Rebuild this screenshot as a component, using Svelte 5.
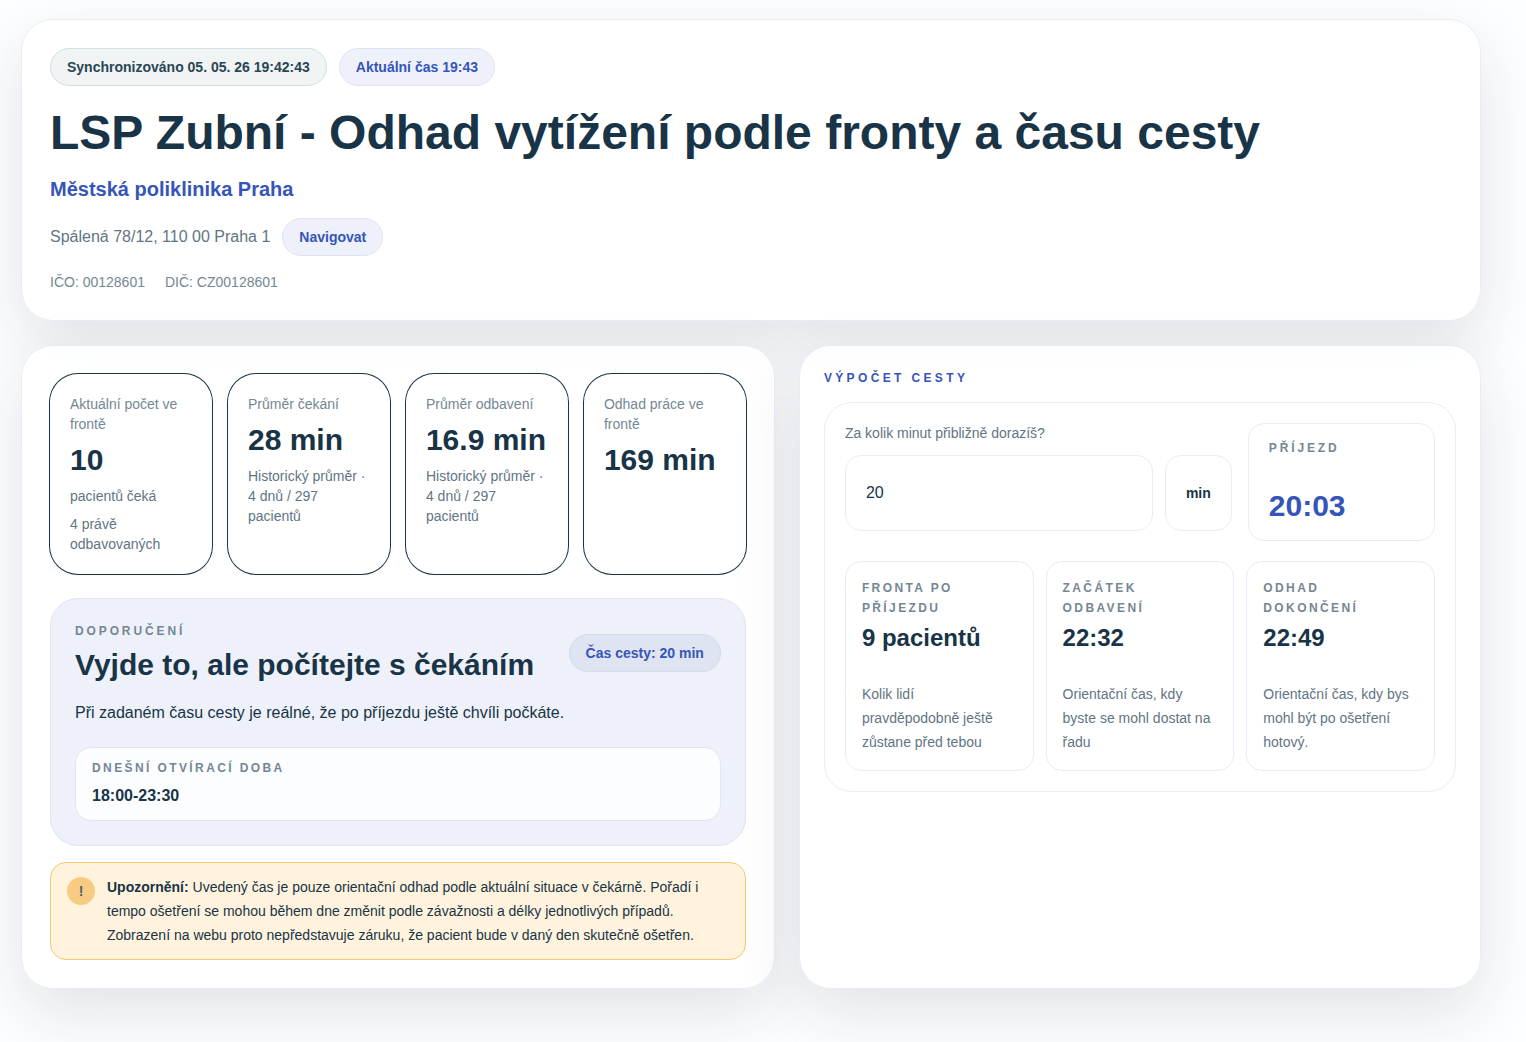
<script lang="ts">
	let minutes = $state(20);

	const stats = [
		{ label: 'Aktuální počet ve frontě', value: '10', notes: ['pacientů čeká', '4 právě odbavovaných'] },
		{ label: 'Průměr čekání', value: '28 min', notes: ['Historický průměr · 4 dnů / 297 pacientů'] },
		{ label: 'Průměr odbavení', value: '16.9 min', notes: ['Historický průměr · 4 dnů / 297 pacientů'] },
		{ label: 'Odhad práce ve frontě', value: '169 min', notes: [] }
	];

	const results = [
		{ label: 'Fronta po příjezdu', value: '9 pacientů', text: 'Kolik lidí pravděpodobně\u00a0ještě zůstane před tebou' },
		{ label: 'Začátek odbavení', value: '22:32', text: 'Orientační čas, kdy byste se mohl dostat na řadu' },
		{ label: 'Odhad dokončení', value: '22:49', text: 'Orientační čas, kdy bys mohl být po ošetření hotový.' }
	];

	// current time is 19:43
	const arrival = $derived.by(() => {
		const total = 19 * 60 + 43 + (Number(minutes) || 0);
		const h = Math.floor(total / 60) % 24;
		const m = total % 60;
		return `${String(h).padStart(2, '0')}:${String(m).padStart(2, '0')}`;
	});
</script>

<main class="page">
	<header class="card hero">
		<div class="pills">
			<span class="pill pill-sync">Synchronizováno 05. 05. 26 19:42:43</span>
			<span class="pill">Aktuální čas 19:43</span>
		</div>
		<h1>LSP Zubní - Odhad vytížení podle fronty a času cesty</h1>
		<p class="clinic">Městská poliklinika Praha</p>
		<div class="address">
			<span>Spálená 78/12, 110 00 Praha 1</span>
			<a class="pill" href="#navigate">Navigovat</a>
		</div>
		<div class="ids">
			<span>IČO: 00128601</span>
			<span>DIČ: CZ00128601</span>
		</div>
	</header>

	<div class="columns">
		<section class="card overview">
			<div class="stats">
				{#each stats as stat}
					<article class="stat">
						<p class="stat-label">{stat.label}</p>
						<p class="big">{stat.value}</p>
						{#each stat.notes as note}
							<p class="stat-note">{note}</p>
						{/each}
					</article>
				{/each}
			</div>

			<div class="advice">
				<div class="advice-head">
					<div>
						<p class="kicker wide">Doporučení</p>
						<h2>Vyjde to, ale počítejte s čekáním</h2>
					</div>
					<span class="pill pill-travel">Čas cesty: {minutes} min</span>
				</div>
				<p class="advice-text">Při zadaném času cesty je reálné, že po příjezdu ještě chvíli počkáte.</p>
				<div class="hours">
					<p class="kicker">Dnešní otvírací doba</p>
					<p class="hours-value">18:00-23:30</p>
				</div>
			</div>

			<div class="warning">
				<span class="warning-icon">!</span>
				<p>
					<strong>Upozornění:</strong>
					<span>
						Uvedený čas je pouze orientační odhad podle aktuální situace v čekárně. Pořadí i tempo ošetření
						se mohou během dne změnit podle závažnosti a délky jednotlivých případů. Zobrazení na webu proto
						nepředstavuje záruku, že pacient bude v daný den skutečně ošetřen.
					</span>
				</p>
			</div>
		</section>

		<section class="card travel">
			<p class="travel-title">Výpočet cesty</p>
			<div class="calculator">
				<div class="entry">
					<div>
						<label for="minutes">Za kolik minut přibližně dorazíš?</label>
						<div class="entry-row">
							<input id="minutes" type="text" inputmode="numeric" bind:value={minutes} />
							<span class="unit">min</span>
						</div>
					</div>
					<div class="arrival">
						<p class="kicker wide">Příjezd</p>
						<p class="arrival-time">{arrival}</p>
					</div>
				</div>
				<div class="results">
					{#each results as result}
						<article class="result">
							<p class="kicker result-label">{result.label}</p>
							<p class="result-value">{result.value}</p>
							<p class="result-text">{result.text}</p>
						</article>
					{/each}
				</div>
			</div>
		</section>
	</div>
</main>

<style>
	:global(body) {
		background: #fdfeff;
	}

	.page {
		--ink: #183446;
		--muted: #5f7583;
		--label: #748792;
		--blue: #3655b8;
		--line: #ebebf8;
		display: flex;
		flex-direction: column;
		gap: 24px;
		padding: 19px 45px 53px 21px;
		color: var(--ink);
		font-family: 'Liberation Sans', Arial, sans-serif;
		font-size: 14px;
		line-height: 20px;
	}

	.page,
	.page * {
		box-sizing: border-box;
	}

	h1,
	h2,
	p {
		margin: 0;
	}

	.card {
		border: 1px solid var(--line);
		border-radius: 32px;
		background: rgba(255, 255, 255, 0.9);
		box-shadow: 0 24px 64px rgba(24, 36, 60, 0.12);
	}

	.hero {
		padding: 28px;
	}

	.pills {
		display: flex;
		flex-wrap: wrap;
		gap: 12px;
	}

	.pill {
		flex-shrink: 0;
		padding: 8px 16px;
		border: 1px solid #dfe3f4;
		border-radius: 20px;
		background: #eef1fa;
		color: var(--blue);
		font-weight: 700;
		text-decoration: none;
	}

	.pill-sync {
		border-color: #d3dde3;
		background: #f0f4f5;
		color: #294653;
	}

	.pill-travel {
		border-color: #d5dbea;
		background: #dfe4f3;
	}

	h1 {
		margin-top: 20px;
		font-size: 48px;
		line-height: 54px;
	}

	.clinic {
		margin-top: 16px;
		color: var(--blue);
		font-size: 20px;
		font-weight: 700;
		line-height: 26px;
	}

	.address {
		display: flex;
		flex-wrap: wrap;
		align-items: center;
		gap: 12px;
		margin-top: 16px;
		color: var(--muted);
		font-size: 16px;
	}

	.address .pill {
		font-size: 14px;
	}

	.ids {
		display: flex;
		gap: 20px;
		margin-top: 16px;
		color: var(--label);
	}

	.columns {
		display: grid;
		grid-template-columns: 1.05fr 0.95fr;
		gap: 24px;
	}

	.overview {
		padding: 28px;
	}

	.stats {
		display: grid;
		grid-template-columns: repeat(4, 1fr);
		gap: 16px;
	}

	.stat {
		padding: 20px;
		border-radius: 28px;
		background: #fff;
		box-shadow: 0 0 0 1px var(--ink);
	}

	.stat-label {
		color: var(--label);
	}

	.big {
		margin-top: 8px;
		font-size: 30px;
		font-weight: 700;
		line-height: 36px;
		white-space: nowrap;
	}

	.stat-note {
		margin-top: 8px;
		color: var(--muted);
	}

	.advice {
		margin-top: 24px;
		padding: 24px;
		border: 1px solid #dfe3f4;
		border-radius: 28px;
		background: #eef1fa;
	}

	.advice-head {
		display: flex;
		align-items: center;
		justify-content: space-between;
		gap: 16px;
	}

	.kicker {
		color: var(--label);
		font-size: 12px;
		font-weight: 700;
		letter-spacing: 0.2em;
		line-height: 16px;
		text-transform: uppercase;
	}

	.kicker.wide {
		letter-spacing: 0.24em;
	}

	h2 {
		margin-top: 8px;
		font-size: 30px;
		line-height: 36px;
	}

	.advice-text {
		margin-top: 16px;
		font-size: 16px;
		line-height: 28px;
	}

	.hours {
		margin-top: 20px;
		padding: 12px 16px;
		border: 1px solid #e2e6f4;
		border-radius: 16px;
		background: #fcfdff;
	}

	.hours-value {
		margin-top: 8px;
		font-size: 16px;
		font-weight: 700;
		line-height: 24px;
	}

	.warning {
		display: flex;
		gap: 12px;
		margin-top: 16px;
		padding: 12px 16px;
		border: 1px solid #f5c877;
		border-radius: 16px;
		background: #fff3de;
		line-height: 24px;
	}

	.warning-icon {
		flex: none;
		width: 28px;
		height: 28px;
		margin-top: 2px;
		border-radius: 50%;
		background: #f8cb82;
		color: #4f626c;
		font-weight: 700;
		line-height: 28px;
		text-align: center;
	}

	.travel {
		padding: 24px;
	}

	.travel-title {
		color: var(--blue);
		font-size: 12px;
		font-weight: 700;
		letter-spacing: 0.28em;
		line-height: 16px;
		text-transform: uppercase;
	}

	.calculator {
		margin-top: 16px;
		padding: 20px;
		border: 1px solid var(--line);
		border-radius: 28px;
		background: #fff;
	}

	.entry {
		display: grid;
		grid-template-columns: 31fr 15fr;
		gap: 16px;
	}

	label {
		display: block;
		color: var(--muted);
		font-weight: 500;
	}

	.entry-row {
		display: flex;
		gap: 12px;
		margin-top: 12px;
	}

	input,
	.unit,
	.arrival,
	.result {
		border: 1px solid var(--line);
		border-radius: 16px;
		background: #fff;
	}

	input {
		flex: 1;
		min-width: 0;
		height: 76px;
		padding: 0 20px;
		color: inherit;
		font: inherit;
		font-size: 16px;
	}

	.unit {
		display: flex;
		align-items: center;
		padding: 0 20px;
		font-weight: 700;
	}

	.arrival {
		display: flex;
		flex-direction: column;
		justify-content: space-between;
		min-height: 118px;
		padding: 16px 20px;
	}

	.arrival-time {
		color: var(--blue);
		font-size: 30px;
		font-weight: 700;
		line-height: 36px;
	}

	.results {
		display: grid;
		grid-template-columns: repeat(3, 1fr);
		gap: 12px;
		margin-top: 20px;
	}

	.result {
		padding: 16px;
	}

	.result-label {
		line-height: 20px;
	}

	.result-value {
		margin-top: 4px;
		font-size: 24px;
		font-weight: 700;
		line-height: 32px;
	}

	.result-text {
		margin-top: 28px;
		color: var(--muted);
		line-height: 24px;
	}
</style>
